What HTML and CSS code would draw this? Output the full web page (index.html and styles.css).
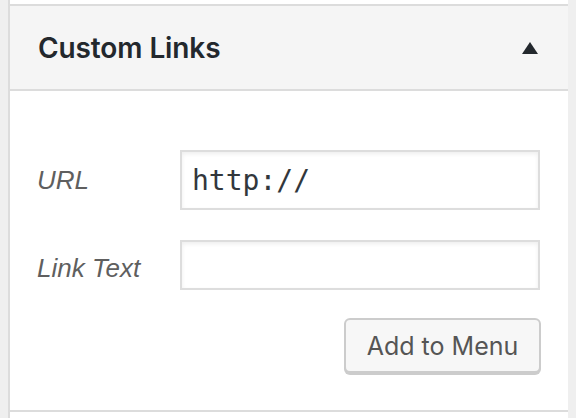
FILE: index.html
```html
<!DOCTYPE html>
<html>
<head>
<meta charset="utf-8">
<link rel="stylesheet" href="styles.css">
</head>
<body>
<div class="sections">
  <div class="prev"></div>
  <section class="acc">
    <h3 class="acc-title"><span class="title-text">Custom Links</span><span class="arrow"></span></h3>
    <div class="acc-body">
      <div class="row row-url">
        <label class="lbl">URL</label>
        <input class="field field-url" type="text" value="http://">
      </div>
      <div class="row row-text">
        <label class="lbl">Link Text</label>
        <input class="field field-text" type="text" value="">
      </div>
      <div class="actions">
        <button class="btn">Add to Menu</button>
      </div>
    </div>
  </section>
  <div class="next"></div>
</div>
</body>
</html>
```
FILE: styles.css
```css
html, body {
  margin: 0;
  padding: 0;
}
body {
  background: #efefef;
  width: 576px;
  height: 418px;
  overflow: hidden;
}
.sections {
  margin-left: 8px;
  width: 560px;
  box-sizing: border-box;
  border-left: 2px solid #dcdcdc;
  background: #fff;
  height: 418px;
}
.prev {
  height: 4px;
  border-bottom: 2px solid #dcdcdc;
}
.acc-title {
  margin: 0;
  height: 83px;
  box-sizing: border-box;
  background: #f5f5f5;
  border-bottom: 2px solid #dcdcdc;
  height: 85px;
  display: flex;
  align-items: center;
  justify-content: space-between;
  padding: 0 30px 0 28px;
  font-family: Inter, "Noto Sans", sans-serif;
  font-weight: 600;
  font-size: 28px;
  color: #23282d;
}
.title-text {
  letter-spacing: -0.1px;
}
.arrow {
  width: 0;
  height: 0;
  border-left: 8px solid transparent;
  border-right: 8px solid transparent;
  border-bottom: 12px solid #23282d;
}
.acc-body {
  height: 321px;
  box-sizing: border-box;
  border-bottom: 2px solid #dcdcdc;
  padding: 59px 28px 0 27px;
  display: flex;
  flex-direction: column;
}
.row {
  display: flex;
  align-items: center;
}
.row-text {
  margin-top: 30px;
}
.lbl {
  width: 143px;
  font-family: "Liberation Sans", Arial, sans-serif;
  font-style: italic;
  font-size: 26px;
  color: #5f5f5f;
}
.row-text .lbl {
  position: relative;
  top: 3px;
}
.field {
  width: 360px;
  box-sizing: border-box;
  border: 2px solid #dddddd;
  box-shadow: inset 0 2px 4px rgba(0, 0, 0, 0.07);
  background: #fff;
  margin: 0;
  outline: none;
  padding: 0 10px;
}
.field-url {
  height: 60px;
  font-family: "DejaVu Sans Mono", "Liberation Mono", monospace;
  font-size: 28px;
  color: #32373c;
}
.field-text {
  height: 50px;
  font-family: "Liberation Sans", Arial, sans-serif;
  font-size: 26px;
}
.actions {
  display: flex;
  justify-content: flex-end;
  margin-top: 28px;
  margin-right: -1px;
}
.btn {
  width: 197px;
  height: 55px;
  box-sizing: border-box;
  border: 2px solid #cccccc;
  border-radius: 6px;
  background: #f7f7f7;
  box-shadow: 0 2px 0 #cccccc;
  font-family: Inter, "Noto Sans", sans-serif;
  font-size: 25px;
  color: #555555;
  padding: 0;
  margin: 0;
}
```
